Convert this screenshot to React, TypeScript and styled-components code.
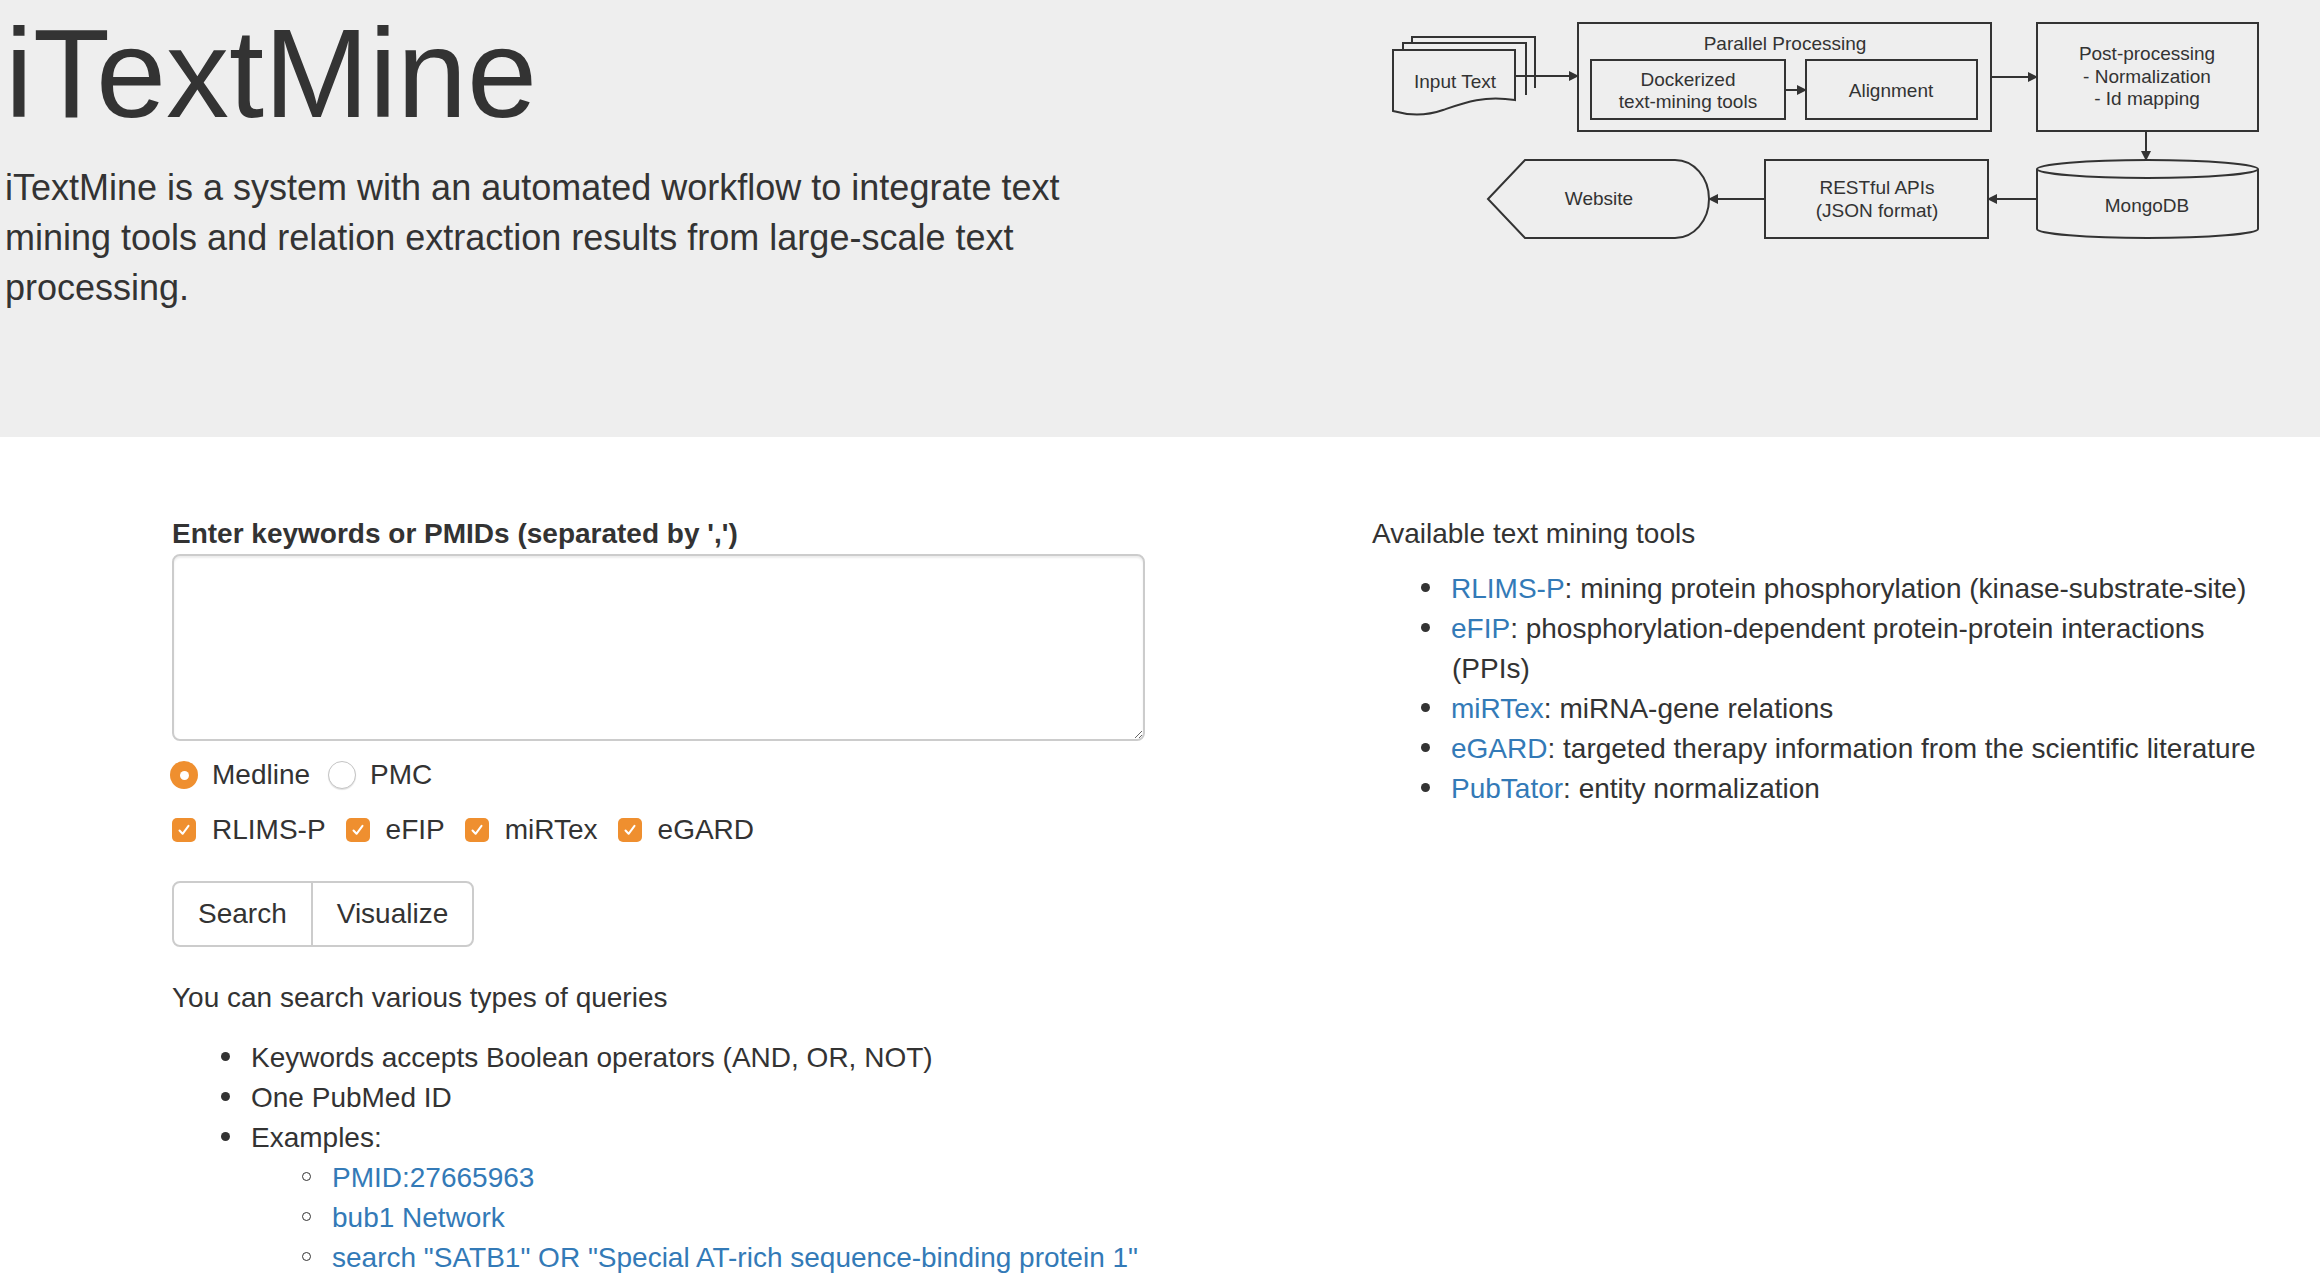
import React from "react";
import styled, { createGlobalStyle } from "styled-components";

const GlobalStyle = createGlobalStyle`
  html, body { margin: 0; padding: 0; background: #fff; }
  body {
    font-family: "Liberation Sans", Helvetica, Arial, sans-serif;
    font-size: 28px;
    line-height: 40px;
    color: #333;
  }
  * { box-sizing: border-box; }
`;

const Header = styled.header`
  background: #eee;
  height: 437px;
  display: flex;
  justify-content: space-between;
  align-items: flex-start;
  padding: 6px 50px 0 5px;
`;

const Intro = styled.div`
  width: 1110px;
`;

const Title = styled.h1`
  margin: 0;
  font-size: 126px;
  line-height: 136px;
  font-weight: 400;
  color: #333;
`;

const Lead = styled.p`
  margin: 21px 0 0;
  font-size: 36px;
  line-height: 50px;
  font-weight: 400;
`;

const DiagramSvg = styled.svg`
  margin-top: 9px;
  flex: none;
  font-family: "Liberation Sans", Helvetica, Arial, sans-serif;
`;

const Main = styled.main`
  display: grid;
  grid-template-columns: 973px 900px;
  column-gap: 227px;
  padding: 77px 0 0 172px;
`;

const Column = styled.section`
  display: flex;
  flex-direction: column;
  align-items: flex-start;
`;

const FieldLabel = styled.label`
  display: block;
  font-weight: 700;
  margin: 0;
`;

const QueryBox = styled.textarea`
  display: block;
  width: 973px;
  height: 187px;
  border: 2px solid #ccc;
  border-radius: 8px;
  box-shadow: inset 0 2px 2px rgba(0, 0, 0, 0.075);
  background: #fff;
  padding: 12px 24px;
  font: inherit;
  color: #555;
  outline: none;
`;

const OptionRow = styled.div<{ $top: number; $gap: number }>`
  display: flex;
  align-items: center;
  height: 40px;
  margin-top: ${(p) => p.$top}px;
  gap: ${(p) => p.$gap}px;
`;

const Option = styled.label<{ $gap: number }>`
  display: flex;
  align-items: center;
  gap: ${(p) => p.$gap}px;
  cursor: pointer;
`;

const RadioDot = styled.span<{ $on: boolean }>`
  width: 28px;
  height: 28px;
  border-radius: 50%;
  display: inline-flex;
  align-items: center;
  justify-content: center;
  background: ${(p) => (p.$on ? "#ef8f2f" : "#fff")};
  border: ${(p) => (p.$on ? "none" : "1px solid #c4c4c4")};
  box-shadow: ${(p) => (p.$on ? "none" : "0 1px 1px rgba(0,0,0,0.12)")};
  &::after {
    content: "";
    display: ${(p) => (p.$on ? "block" : "none")};
    width: 9px;
    height: 9px;
    border-radius: 50%;
    background: #fff;
  }
`;

const RadioRow = styled(OptionRow)`
  margin-left: -2px;
`;

const CheckBox = styled.span`
  width: 24px;
  height: 24px;
  border-radius: 5px;
  background: #ef8f2f;
  display: inline-flex;
  align-items: center;
  justify-content: center;
`;

const ButtonGroup = styled.div`
  display: flex;
  margin-top: 31px;
`;

const GroupButton = styled.button<{ $first?: boolean }>`
  height: 66px;
  padding: 0 24px;
  border: 2px solid #ccc;
  background: #fff;
  color: #333;
  font: inherit;
  font-size: 28px;
  border-radius: ${(p) => (p.$first ? "8px 0 0 8px" : "0 8px 8px 0")};
  margin-left: ${(p) => (p.$first ? "0" : "-2px")};
  cursor: pointer;
`;

const Para = styled.p<{ $top?: number; $bottom: number }>`
  margin: ${(p) => p.$top ?? 0}px 0 ${(p) => p.$bottom}px;
`;

const List = styled.ul<{ $sub?: boolean }>`
  margin: 0;
  padding-left: 80px;
  list-style: none;
  & > li::before {
    content: "";
    display: inline-block;
    vertical-align: middle;
    position: relative;
    top: -3px;
    width: ${(p) => (p.$sub ? "7px" : "9px")};
    height: ${(p) => (p.$sub ? "7px" : "9px")};
    border-radius: 50%;
    background: ${(p) => (p.$sub ? "transparent" : "#333")};
    border: ${(p) => (p.$sub ? "1.5px solid #333" : "none")};
    margin-left: ${(p) => (p.$sub ? "-30px" : "-31px")};
    margin-right: ${(p) => (p.$sub ? "21px" : "21px")};
  }
`;

const ToolList = styled(List)`
  width: 900px;
`;

const Link = styled.a`
  color: #337ab7;
  text-decoration: none;
`;

const Check = () => (
  <svg width="14" height="14" viewBox="0 0 14 14">
    <path d="M2.5 7.5 L5.6 10.8 L11.5 2.8" fill="none" stroke="#fff" strokeWidth="2" strokeLinecap="round" strokeLinejoin="round" />
  </svg>
);

const Diagram = () => {
  const s = "#333";
  return (
    <DiagramSvg width="885" height="230" viewBox="0 0 885 230">
      <defs>
        <marker id="ah" viewBox="0 0 10 10" refX="9" refY="5" markerWidth="5" markerHeight="5" orient="auto">
          <path d="M0 0 L10 5 L0 10 Z" fill={s} />
        </marker>
      </defs>
      <g fill="#eee" stroke={s} strokeWidth="2">
        <path d="M27 73 V22 H150 V73" />
        <path d="M18 80 V28 H141 V80" />
        <path d="M8 35 H130 V85 C98 80 78 88 58 95 C38 102 22 100 8 96 Z" />
        <rect x="193" y="8" width="413" height="108" />
        <rect x="206" y="45" width="194" height="59" />
        <rect x="421" y="45" width="171" height="59" />
        <rect x="652" y="8" width="221" height="108" />
        <path d="M652 154 V214 A110.5 9 0 0 0 873 214 V154" />
        <ellipse cx="762.5" cy="154" rx="110.5" ry="9" />
        <rect x="380" y="145" width="223" height="78" />
        <path d="M103 184 L140 145 H290 A34 39 0 0 1 290 223 H140 Z" />
      </g>
      <g stroke={s} strokeWidth="2" fill="none" markerEnd="url(#ah)">
        <line x1="130" y1="61" x2="193" y2="61" />
        <line x1="400" y1="75" x2="421" y2="75" />
        <line x1="606" y1="62" x2="652" y2="62" />
        <line x1="761" y1="116" x2="761" y2="145" />
        <line x1="652" y1="184" x2="603" y2="184" />
        <line x1="380" y1="184" x2="324" y2="184" />
      </g>
      <g fill={s} fontSize="19" textAnchor="middle" dominantBaseline="middle">
        <text x="70" y="68">Input Text</text>
        <text x="400" y="30">Parallel Processing</text>
        <text x="303" y="66">Dockerized</text>
        <text x="303" y="88">text-mining tools</text>
        <text x="506" y="77">Alignment</text>
        <text x="762" y="40">Post-processing</text>
        <text x="762" y="63">- Normalization</text>
        <text x="762" y="85">- Id mapping</text>
        <text x="762" y="192">MongoDB</text>
        <text x="492" y="174">RESTful APIs</text>
        <text x="492" y="197">(JSON format)</text>
        <text x="214" y="185">Website</text>
      </g>
    </DiagramSvg>
  );
};

const tools = [
  { name: "RLIMS-P", desc: "mining protein phosphorylation (kinase-substrate-site)" },
  { name: "eFIP", desc: "phosphorylation-dependent protein-protein interactions (PPIs)" },
  { name: "miRTex", desc: "miRNA-gene relations" },
  { name: "eGARD", desc: "targeted therapy information from the scientific literature" },
  { name: "PubTator", desc: "entity normalization" },
];

export default function App() {
  return (
    <>
      <GlobalStyle />
      <Header>
        <Intro>
          <Title>iTextMine</Title>
          <Lead>
            iTextMine is a system with an automated workflow to integrate text mining tools and relation
            extraction results from large-scale text processing.
          </Lead>
        </Intro>
        <Diagram />
      </Header>
      <Main>
        <Column>
          <FieldLabel htmlFor="q">Enter keywords or PMIDs (separated by ',')</FieldLabel>
          <QueryBox id="q" />
          <RadioRow $top={14} $gap={18}>
            <Option $gap={14}>
              <RadioDot $on />
              Medline
            </Option>
            <Option $gap={14}>
              <RadioDot $on={false} />
              PMC
            </Option>
          </RadioRow>
          <OptionRow $top={15} $gap={20}>
            {["RLIMS-P", "eFIP", "miRTex", "eGARD"].map((t) => (
              <Option key={t} $gap={16}>
                <CheckBox>
                  <Check />
                </CheckBox>
                {t}
              </Option>
            ))}
          </OptionRow>
          <ButtonGroup>
            <GroupButton $first>Search</GroupButton>
            <GroupButton>Visualize</GroupButton>
          </ButtonGroup>
          <Para $top={31} $bottom={20}>
            You can search various types of queries
          </Para>
          <List>
            <li>Keywords accepts Boolean operators (AND, OR, NOT)</li>
            <li>One PubMed ID</li>
            <li>
              Examples:
              <List $sub>
                <li>
                  <Link href="#">PMID:27665963</Link>
                </li>
                <li>
                  <Link href="#">bub1 Network</Link>
                </li>
                <li>
                  <Link href="#">search "SATB1" OR "Special AT-rich sequence-binding protein 1"</Link>
                </li>
              </List>
            </li>
          </List>
        </Column>
        <Column>
          <Para $bottom={15}>Available text mining tools</Para>
          <ToolList>
            {tools.map((t) => (
              <li key={t.name}>
                <Link href="#">{t.name}</Link>: {t.desc}
              </li>
            ))}
          </ToolList>
        </Column>
      </Main>
    </>
  );
}
